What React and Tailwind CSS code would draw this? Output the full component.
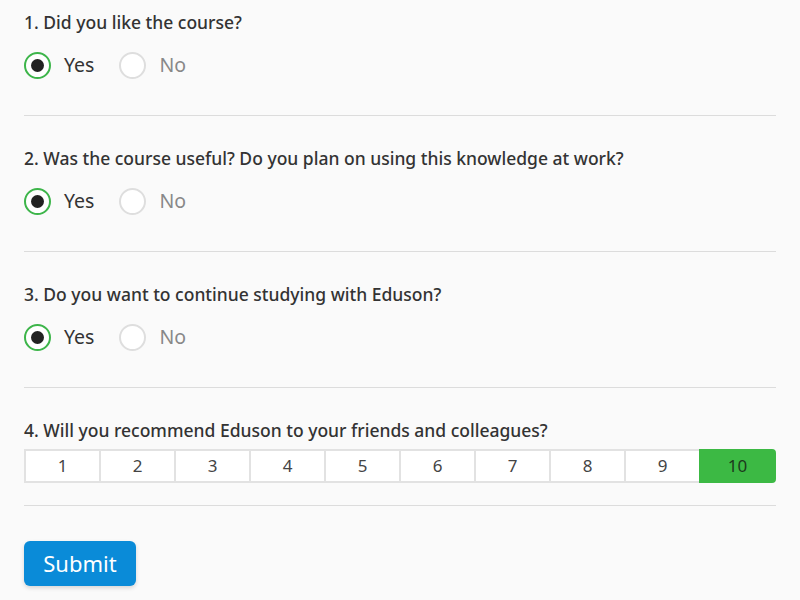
import { useState } from "react";

const QUESTIONS = [
  "1. Did you like the course?",
  "2. Was the course useful? Do you plan on using this knowledge at work?",
  "3. Do you want to continue studying with Eduson?",
];

function Radio({ checked, label, onClick }) {
  return (
    <button onClick={onClick} className="flex items-center gap-[13px] h-[28px]">
      <span
        className={
          checked
            ? "grid place-items-center h-[27px] w-[27px] rounded-full border-[2.5px] border-[#3db54a] bg-white"
            : "grid place-items-center h-[27px] w-[27px] rounded-full border-[2.5px] border-[#dedede] bg-white"
        }
      >
        {checked && <span className="h-[13px] w-[13px] rounded-full bg-[#222]" />}
      </span>
      <span className={checked ? "text-[19.5px] text-[#333]" : "text-[19.5px] text-[#888]"}>{label}</span>
    </button>
  );
}

export default function App() {
  const [answers, setAnswers] = useState([true, true, true]);
  const [score, setScore] = useState(10);

  return (
    <div className="min-h-[600px] bg-[#fafafa] px-6" style={{ fontFamily: '"Noto Sans", sans-serif' }}>
      {QUESTIONS.map((q, i) => (
        <div key={q} className={i === 0 ? "pt-[10px] pb-[36px] border-b border-[#dcdcdc]" : "pt-[30px] pb-[36px] border-b border-[#dcdcdc]"}>
          <div className="h-[24px] leading-[24px] text-[17.5px] font-medium text-[#333]">{q}</div>
          <div className="mt-[17px] flex items-center gap-[25px]">
            <Radio
              checked={answers[i]}
              label="Yes"
              onClick={() => setAnswers((a) => a.map((v, j) => (j === i ? true : v)))}
            />
            <Radio
              checked={!answers[i]}
              label="No"
              onClick={() => setAnswers((a) => a.map((v, j) => (j === i ? false : v)))}
            />
          </div>
        </div>
      ))}

      <div className="pt-[30px] pb-[22px] border-b border-[#dcdcdc]">
        <div className="h-[24px] leading-[24px] text-[17.5px] font-medium text-[#333]">
          4. Will you recommend Eduson to your friends and colleagues?
        </div>
        <div className="mt-[7px] flex">
          {[1, 2, 3, 4, 5, 6, 7, 8, 9, 10].map((n) => (
            <button
              key={n}
              onClick={() => setScore(n)}
              className={
                n === score
                  ? "flex-1 h-[34px] -ml-[2px] first:ml-0 rounded-r-[4px] border-2 border-[#3cb944] bg-[#3cb944] text-[17px] text-[#1c3a1c] relative"
                  : "flex-1 h-[34px] -ml-[2px] first:ml-0 border-2 border-[#e2e2e2] bg-white text-[17px] text-[#444]"
              }
            >
              {n}
            </button>
          ))}
        </div>
      </div>

      <button className="mt-[35px] h-[45px] w-[112px] rounded-[6px] bg-[#0a8bd8] text-[22px] text-white shadow-[0_2px_4px_rgba(0,0,0,0.15)]">
        Submit
      </button>
    </div>
  );
}
